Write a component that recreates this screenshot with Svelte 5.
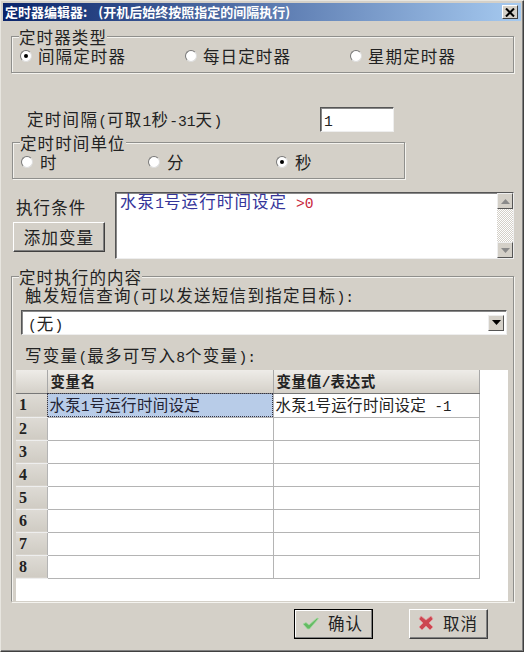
<script lang="ts">
    const rows = [1, 2, 3, 4, 5, 6, 7, 8];
</script>

<div class="window">
    <div class="titlebar">
        <span class="title">定时器编辑器:<span class="title-tail">(开机后始终按照指定的间隔执行)</span></span>
        <button class="close" aria-label="关闭">
            <svg width="10" height="9" viewBox="0 0 10 9"><path d="M1 0.5 L9 8.5 M9 0.5 L1 8.5" stroke="#000" stroke-width="2" fill="none" /></svg>
        </button>
    </div>

    <div class="content">
        <fieldset class="group g1">
            <legend>定时器类型</legend>
            <div class="radios">
                <label class="radio r1"><span class="dot on"></span>间隔定时器</label>
                <label class="radio r2"><span class="dot"></span>每日定时器</label>
                <label class="radio"><span class="dot"></span>星期定时器</label>
            </div>
        </fieldset>

        <div class="interval">
            <span class="interval-label">定时间隔<span class="m">(</span>可取<span class="m">1</span>秒<span class="m">-31</span>天<span class="m">)</span></span>
            <div class="input"><span class="m">1</span></div>
        </div>

        <fieldset class="group g2">
            <legend>定时时间单位</legend>
            <div class="radios">
                <label class="radio u1"><span class="dot"></span>时</label>
                <label class="radio u2"><span class="dot"></span>分</label>
                <label class="radio"><span class="dot on"></span>秒</label>
            </div>
        </fieldset>

        <div class="cond">
            <div class="cond-left">
                <span class="cond-label">执行条件</span>
                <button class="btn add">添加变量</button>
            </div>
            <div class="memo">
                <div class="memo-text"><span class="blue">水泵<span class="m">1</span>号运行时间设定</span><span class="m red">&nbsp;&gt;0</span></div>
                <div class="scroll">
                    <span class="arrow"><svg width="9" height="5" viewBox="0 0 9 5"><path d="M4.5 0 L9 5 L0 5 Z" fill="#8a8a8a" /></svg></span>
                    <span class="track"></span>
                    <span class="arrow"><svg width="9" height="5" viewBox="0 0 9 5"><path d="M0 0 L9 0 L4.5 5 Z" fill="#8a8a8a" /></svg></span>
                </div>
            </div>
        </div>

        <fieldset class="group g3">
            <legend>定时执行的内容</legend>
            <div class="line sms">触发短信查询<span class="m">(</span>可以发送短信到指定目标<span class="m">):</span></div>
            <div class="combo">
                <span class="combo-text"><span class="m">(</span>无<span class="m">)</span></span>
                <span class="arrow combo-btn"><svg width="9" height="5" viewBox="0 0 9 5"><path d="M0 0 L9 0 L4.5 5 Z" fill="#000" /></svg></span>
            </div>
            <div class="line write">写变量<span class="m">(</span>最多可写入<span class="m">8</span>个变量<span class="m">):</span></div>
            <div class="grid-wrap">
                <table>
                    <thead>
                        <tr><th class="corner"></th><th>变量名</th><th>变量值<span class="m">/</span>表达式</th></tr>
                    </thead>
                    <tbody>
                        {#each rows as r}
                            <tr>
                                <td class="num">{r}</td>
                                <td class:selected={r === 1}>{#if r === 1}水泵<span class="m">1</span>号运行时间设定{/if}</td>
                                <td>{#if r === 1}水泵<span class="m">1</span>号运行时间设定<span class="m">&nbsp;-1</span>{/if}</td>
                            </tr>
                        {/each}
                    </tbody>
                </table>
            </div>
        </fieldset>

        <div class="actions">
            <button class="btn action default">
                <svg width="18" height="14" viewBox="0 0 18 14"><path d="M1 8 L4 6.5 L7 9 L15 2 L16.5 2.5 L7.5 13 L5.5 13 Z" fill="#63bb63" stroke="#a5d8a0" stroke-width="0.8" /></svg>
                确认
            </button>
            <button class="btn action">
                <svg width="18" height="16" viewBox="0 0 16 16"><path d="M3 1 L8 5 L13 1 L15 4 L11 8 L15 12 L12 15 L8 11 L4 15 L1 12 L5 8 L1 4 Z" fill="#cc4650" stroke="#e59aa0" stroke-width="0.8" /></svg>
                取消
            </button>
        </div>
    </div>
</div>

<style>
    :global(body) {
        margin: 0;
        background: #d4d0c8;
    }
    .window {
        box-sizing: border-box;
        width: 524px;
        height: 652px;
        padding: 2px 2px 1px 2px;
        background: #d4d0c8;
        border: 1px solid;
        border-color: #e8e6e0 #404040 #404040 #e8e6e0;
        box-shadow: inset -1px -1px 0 #808080;
        font-family: "Noto Sans CJK SC", sans-serif;
        font-size: 16.5px;
        letter-spacing: 1.1px;
        color: #222;
    }
    .m {
        font-family: "Liberation Mono", "Noto Sans CJK SC", monospace;
        font-size: 14.67px;
        letter-spacing: 0;
    }
    .titlebar {
        display: flex;
        justify-content: space-between;
        align-items: center;
        height: 18px;
        padding: 0 3px 0 2px;
        background: linear-gradient(90deg, #0a246a, #a6caf0);
    }
    .title {
        color: #fff;
        font-weight: 700;
        font-size: 13px;
        letter-spacing: 0;
        line-height: 18px;
    }
    .title-tail {
        margin-left: 11px;
    }
    .close {
        display: flex;
        align-items: center;
        justify-content: center;
        width: 16px;
        height: 14px;
        padding: 0;
        background: #d4d0c8;
        border: 1px solid;
        border-color: #fff #404040 #404040 #fff;
    }
    .content {
        padding: 6px 7px 0 8px;
    }
    .group {
        margin: 0;
        padding: 0;
        min-width: 0;
        border: 1px solid #8f8f8c;
        box-shadow: 1px 1px 0 #f4f3ef, inset 1px 1px 0 #f4f3ef;
    }
    legend {
        padding: 1px 0 0;
        margin-left: 7px;
        line-height: 18px;
        background: #d4d0c8;
    }
    .g1 {
        height: 46px;
        box-sizing: border-box;
    }
    .g2 {
        box-sizing: border-box;
        margin-top: 2px;
        margin-left: 1px;
        width: 393px;
        height: 46px;
    }
    .radios {
        display: flex;
        align-items: center;
        height: 20px;
        padding-left: 8px;
    }
    .radio {
        display: flex;
        align-items: center;
        gap: 6px;
    }
    .r1, .r2 {
        width: 165px;
    }
    .g2 .radio {
        gap: 7px;
    }
    .u1 {
        width: 127px;
    }
    .u2 {
        width: 128px;
    }
    .dot {
        box-sizing: border-box;
        width: 12px;
        height: 12px;
        border-radius: 50%;
        background: #fff;
        border: 1px solid;
        border-color: #777 #ddd #ddd #777;
        display: flex;
        align-items: center;
        justify-content: center;
    }
    .dot.on::after {
        content: "";
        width: 4px;
        height: 4px;
        border-radius: 50%;
        background: #000;
    }
    .interval {
        display: flex;
        align-items: center;
        margin-top: 34px;
        height: 24px;
    }
    .interval-label {
        margin-left: 16px;
        width: 293px;
        letter-spacing: 1.3px;
    }
    .input {
        box-sizing: border-box;
        width: 74px;
        height: 25px;
        padding: 1px 0 0 3px;
        line-height: 21px;
        background: #fff;
        border: 1px solid;
        border-color: #555 #eee #eee #555;
        box-shadow: inset 1px 1px 0 #888;
    }
    .cond {
        display: flex;
        margin-top: 13px;
        height: 67px;
    }
    .cond-left {
        width: 102px;
        margin-left: 2px;
        display: flex;
        flex-direction: column;
    }
    .cond-label {
        line-height: 20px;
        margin: 5px 0 5px 3px;
    }
    .btn {
        box-sizing: border-box;
        font: inherit;
        letter-spacing: inherit;
        color: #222;
        background: #d4d0c8;
        border: 1px solid;
        border-color: #fff #404040 #404040 #fff;
        box-shadow: inset -1px -1px 0 #808080;
        padding: 0;
    }
    .add {
        width: 92px;
        height: 30px;
    }
    .memo {
        flex: 1;
        display: flex;
        background: #fff;
        border: 1px solid;
        border-color: #555 #eee #eee #555;
        box-shadow: inset 1px 1px 0 #888;
        min-width: 0;
    }
    .memo-text {
        flex: 1;
        padding: 0 0 0 4px;
        line-height: 16px;
    }
    .blue {
        color: #35359a;
    }
    .red {
        color: #c8283c;
    }
    .scroll {
        width: 16px;
        display: flex;
        flex-direction: column;
    }
    .track {
        flex: 1;
        background: repeating-conic-gradient(#d4d0c8 0 25%, #fff 0 50%) 0 0 / 2px 2px;
    }
    .arrow {
        box-sizing: border-box;
        flex: none;
        width: 16px;
        height: 16px;
        display: flex;
        align-items: center;
        justify-content: center;
        background: #d4d0c8;
        border: 1px solid;
        border-color: #eee #555 #555 #eee;
    }
    .g3 {
        box-sizing: border-box;
        margin-top: 8px;
        height: 335px;
        border-bottom-color: #d4d0c8;
    }
    .line {
        line-height: 20px;
        margin-left: 13px;
        letter-spacing: 1.3px;
    }
    .sms {
        margin-top: -1px;
    }
    .combo {
        display: flex;
        align-items: center;
        justify-content: space-between;
        box-sizing: border-box;
        height: 25px;
        margin: 2px 6px 0 9px;
        padding: 0 2px 0 6px;
        background: #fff;
        border: 1px solid;
        border-color: #555 #eee #eee #555;
        box-shadow: inset 1px 1px 0 #888;
    }
    .write {
        margin-top: 10px;
    }
    .grid-wrap {
        margin: 2px 5px 0 4px;
        height: 231px;
        background: #fff;
    }
    table {
        border-collapse: collapse;
        table-layout: fixed;
        width: 464px;
        background: #fff;
    }
    thead tr, tbody tr {
        height: 23px;
    }
    th {
        box-sizing: border-box;
        padding: 0 0 1px 3px;
        text-align: left;
        font-size: 14.5px;
        letter-spacing: 0.6px;
        font-weight: 700;
        background: linear-gradient(#eeece8, #d4d0c8);
        border-right: 1px solid #a8a8a8;
        border-bottom: 1px solid #777;
    }
    .corner {
        width: 31px;
        padding: 0;
    }
    th:nth-child(2) {
        width: 226px;
    }
    td {
        box-sizing: border-box;
        padding: 0 0 0 2px;
        font-size: 15.5px;
        letter-spacing: 0.3px;
        line-height: 20px;
        border: 1px solid #b4b4b4;
        border-top: 0;
        white-space: nowrap;
        overflow: hidden;
    }
    td .m {
        font-size: 14px;
    }
    td.num {
        padding-left: 3px;
        font-family: "Liberation Serif", serif;
        font-weight: 700;
        font-size: 16px;
        border: 0;
        border-bottom: 1px solid #eee;
        background: linear-gradient(#dedbd5, #cfcbc3);
    }
    td.selected {
        background: #b8cce8;
        color: #223;
        outline: 1px dotted #334;
        outline-offset: -1px;
    }
    .actions {
        display: flex;
        margin-top: 7px;
        margin-left: 283px;
        gap: 36px;
    }
    .action {
        display: flex;
        align-items: center;
        gap: 8px;
        width: 79px;
        height: 30px;
        padding: 0 0 3px 7px;
    }
    .default {
        border-color: #000;
        box-shadow: inset -1px -1px 0 #808080, inset 1px 1px 0 #fff;
    }
</style>
